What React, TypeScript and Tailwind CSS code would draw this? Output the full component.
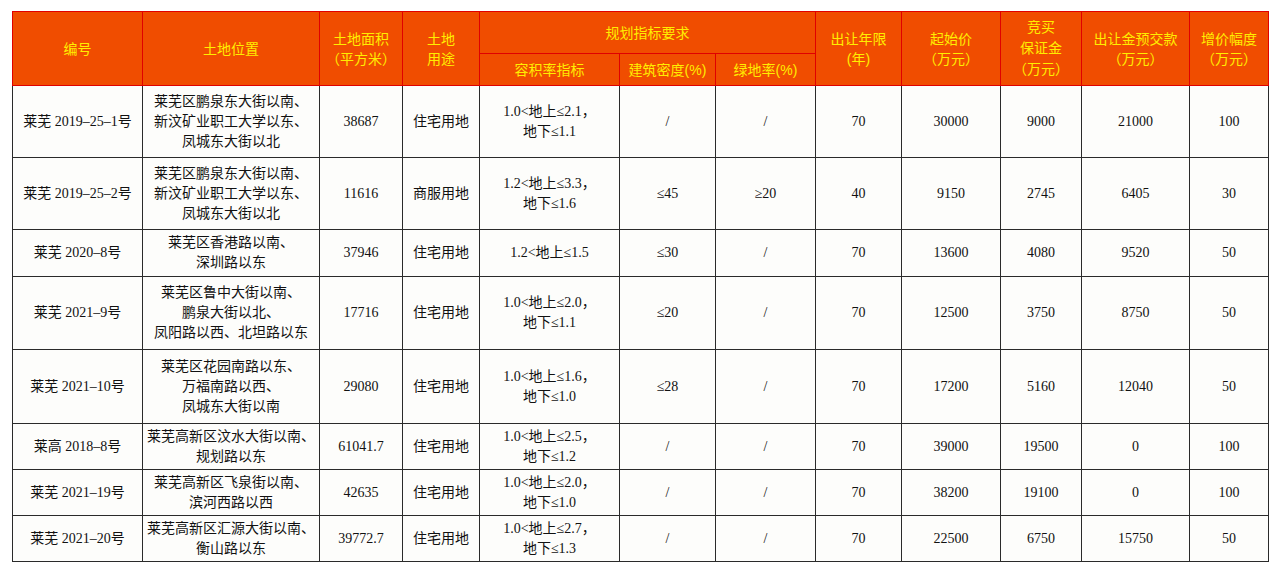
import React from 'react'

const rows = [
  { id: '莱芜 2019–25–1号', loc: ['莱芜区鹏泉东大街以南、', '新汶矿业职工大学以东、', '凤城东大街以北'], area: '38687', use: '住宅用地', far: ['1.0<地上≤2.1，', '地下≤1.1'], density: '/', green: '/', years: '70', price: '30000', deposit: '9000', prepay: '21000', step: '100', h: 'h-[72px]' },
  { id: '莱芜 2019–25–2号', loc: ['莱芜区鹏泉东大街以南、', '新汶矿业职工大学以东、', '凤城东大街以北'], area: '11616', use: '商服用地', far: ['1.2<地上≤3.3，', '地下≤1.6'], density: '≤45', green: '≥20', years: '40', price: '9150', deposit: '2745', prepay: '6405', step: '30', h: 'h-[72px]' },
  { id: '莱芜 2020–8号', loc: ['莱芜区香港路以南、', '深圳路以东'], area: '37946', use: '住宅用地', far: ['1.2<地上≤1.5'], density: '≤30', green: '/', years: '70', price: '13600', deposit: '4080', prepay: '9520', step: '50', h: 'h-[47px]' },
  { id: '莱芜 2021–9号', loc: ['莱芜区鲁中大街以南、', '鹏泉大街以北、', '凤阳路以西、北坦路以东'], area: '17716', use: '住宅用地', far: ['1.0<地上≤2.0，', '地下≤1.1'], density: '≤20', green: '/', years: '70', price: '12500', deposit: '3750', prepay: '8750', step: '50', h: 'h-[73px]' },
  { id: '莱芜 2021–10号', loc: ['莱芜区花园南路以东、', '万福南路以西、', '凤城东大街以南'], area: '29080', use: '住宅用地', far: ['1.0<地上≤1.6，', '地下≤1.0'], density: '≤28', green: '/', years: '70', price: '17200', deposit: '5160', prepay: '12040', step: '50', h: 'h-[74px]' },
  { id: '莱高 2018–8号', loc: ['莱芜高新区汶水大街以南、', '规划路以东'], area: '61041.7', use: '住宅用地', far: ['1.0<地上≤2.5，', '地下≤1.2'], density: '/', green: '/', years: '70', price: '39000', deposit: '19500', prepay: '0', step: '100', h: 'h-[46px]' },
  { id: '莱芜 2021–19号', loc: ['莱芜高新区飞泉街以南、', '滨河西路以西'], area: '42635', use: '住宅用地', far: ['1.0<地上≤2.0，', '地下≤1.0'], density: '/', green: '/', years: '70', price: '38200', deposit: '19100', prepay: '0', step: '100', h: 'h-[46px]' },
  { id: '莱芜 2021–20号', loc: ['莱芜高新区汇源大街以南、', '衡山路以东'], area: '39772.7', use: '住宅用地', far: ['1.0<地上≤2.7，', '地下≤1.3'], density: '/', green: '/', years: '70', price: '22500', deposit: '6750', prepay: '15750', step: '50', h: 'h-[46px]' },
]

const widths = [130, 177, 83, 77, 140, 96, 100, 86, 99, 81, 108, 79]

function Lines({ items }: { items: string[] }) {
  return (
    <>
      {items.map((t, i) => (
        <div key={i} className="whitespace-nowrap">{t}</div>
      ))}
    </>
  )
}

export default function App() {
  const th = 'border border-[#e00000] bg-[#f04d00] text-[#ffee00] text-[14px] leading-[20px] font-normal text-center align-middle p-0'
  const td = 'border border-[#2a2a2a] text-center align-middle p-0'
  return (
    <div className="min-h-screen bg-white pl-[12px] pt-[11px]">
      <table
        className="table-fixed border-collapse w-[1256px] bg-[#fdfdfb] text-[#111111]"
        style={{ fontFamily: '"Liberation Serif", "Noto Sans CJK SC", serif' }}
      >
        <colgroup>
          {widths.map((w, i) => (
            <col key={i} style={{ width: w }} />
          ))}
        </colgroup>
        <thead style={{ fontFamily: '"Liberation Sans", "Noto Sans CJK SC", sans-serif' }}>
          <tr className="h-[42px]">
            <th rowSpan={2} className={th}>编号</th>
            <th rowSpan={2} className={th}>土地位置</th>
            <th rowSpan={2} className={th}>土地面积<br />（平方米）</th>
            <th rowSpan={2} className={th}>土地<br />用途</th>
            <th colSpan={3} className={th}>规划指标要求</th>
            <th rowSpan={2} className={th}>出让年限<br />(年)</th>
            <th rowSpan={2} className={th}>起始价<br />（万元）</th>
            <th rowSpan={2} className={`${th} leading-[21px]`}>竞买<br />保证金<br />（万元）</th>
            <th rowSpan={2} className={th}>出让金预交款<br />（万元）</th>
            <th rowSpan={2} className={th}>增价幅度<br />（万元）</th>
          </tr>
          <tr className="h-[32px]">
            <th className={th}>容积率指标</th>
            <th className={th}>建筑密度(%)</th>
            <th className={th}>绿地率(%)</th>
          </tr>
        </thead>
        <tbody className="text-[14px] leading-[20px]">
          {rows.map((r, i) => (
            <tr key={i} className={r.h}>
              <td className={td}>{r.id}</td>
              <td className={td}><Lines items={r.loc} /></td>
              <td className={td}>{r.area}</td>
              <td className={td}>{r.use}</td>
              <td className={td}><Lines items={r.far} /></td>
              <td className={td}>{r.density}</td>
              <td className={td}>{r.green}</td>
              <td className={td}>{r.years}</td>
              <td className={td}>{r.price}</td>
              <td className={td}>{r.deposit}</td>
              <td className={td}>{r.prepay}</td>
              <td className={td}>{r.step}</td>
            </tr>
          ))}
        </tbody>
      </table>
    </div>
  )
}
